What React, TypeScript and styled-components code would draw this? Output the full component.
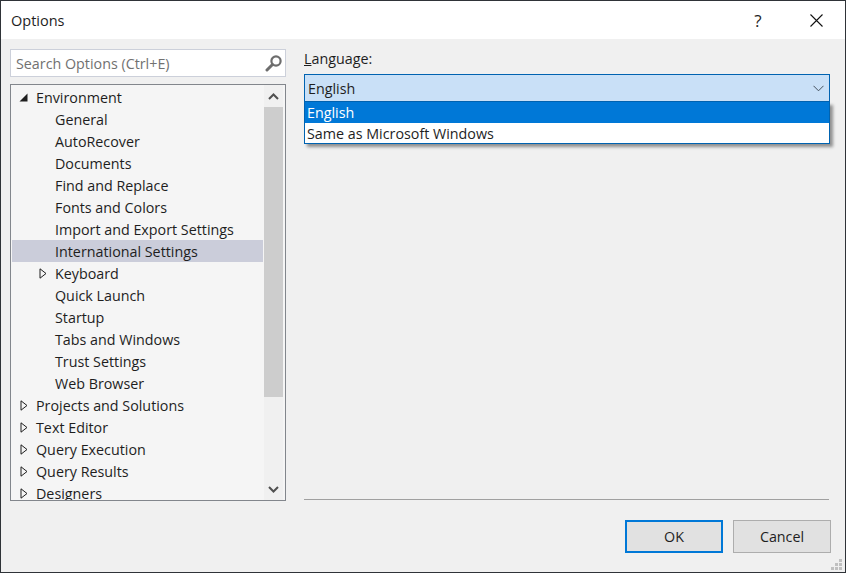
import React from 'react';
import styled, { createGlobalStyle } from 'styled-components';

const fontStack = '"Open Sans", "Noto Sans", "Liberation Sans", sans-serif';
const textColor = '#1e1e1e';
const fontSize = 14.3;

const GlobalStyle = createGlobalStyle`
  html, body {
    margin: 0;
    padding: 0;
    background: #fff;
  }
  body {
    font-family: ${fontStack};
    font-size: ${fontSize}px;
    color: ${textColor};
  }
`;

const Window = styled.div`
  position: relative;
  box-sizing: border-box;
  width: 846px;
  height: 573px;
  border: 1px solid #2f3338;
  background: #f0f0f0;
  display: flex;
  flex-direction: column;
`;

const TitleBar = styled.div`
  height: 38px;
  background: #fff;
  display: flex;
  align-items: center;
  padding-left: 10px;
`;
const Title = styled.span`
  flex: 1;
  font-size: 14.5px;
`;
const TitleButton = styled.button`
  width: 58px;
  height: 38px;
  padding: 0;
  border: 0;
  background: transparent;
  display: flex;
  align-items: center;
  justify-content: center;
  font: inherit;
  font-size: 17px;
  color: ${textColor};
`;

const Body = styled.div`
  display: flex;
  gap: 18px;
  padding: 10px 14px 0 9px;
  height: 452px;
`;

const LeftColumn = styled.div`
  width: 276px;
  display: flex;
  flex-direction: column;
  gap: 7px;
`;

const SearchBox = styled.div`
  box-sizing: border-box;
  height: 28px;
  flex: none;
  border: 1px solid #ccd0da;
  background: #fff;
  display: flex;
  align-items: center;
  padding: 0 2px 0 5px;
`;
const SearchInput = styled.span`
  flex: 1;
  color: #717171;
`;

const Tree = styled.div`
  box-sizing: border-box;
  flex: 1;
  min-height: 0;
  border: 1px solid #82868c;
  background: #f5f5f5;
  display: flex;
  overflow: hidden;
`;
const TreeList = styled.div`
  flex: 1;
  padding: 1px 1px 0 1px;
  overflow: hidden;
`;
const Row = styled.div<{ $level: number; $selected?: boolean }>`
  height: 22px;
  display: flex;
  align-items: center;
  padding-left: ${(p) => p.$level * 19 + 7}px;
  background: ${(p) => (p.$selected ? '#cbcdda' : 'transparent')};
  white-space: nowrap;
`;
const ArrowSlot = styled.span`
  width: 17px;
  flex: none;
  display: flex;
  align-items: center;
`;

const Scrollbar = styled.div`
  width: 19px;
  flex: none;
  margin-right: 2px;
  background: #f0f0f0;
  display: flex;
  flex-direction: column;
`;
const ScrollButton = styled.div`
  height: 22px;
  flex: none;
  display: flex;
  align-items: center;
  justify-content: center;
`;
const ScrollThumb = styled.div`
  height: 290px;
  flex: none;
  background: #cdcdcd;
`;
const ScrollTrack = styled.div`
  flex: 1;
`;

const RightColumn = styled.div`
  flex: 1;
  display: flex;
  flex-direction: column;
`;
const Label = styled.label`
  height: 25px;
  line-height: 20px;
`;
const ComboWrap = styled.div`
  position: relative;
  margin-right: 1px;
`;
const Combo = styled.div`
  box-sizing: border-box;
  height: 28px;
  border: 1px solid #0063b1;
  background: #c9e0f7;
  display: flex;
  align-items: center;
  justify-content: space-between;
  padding: 0 5px 0 3px;
`;
const Dropdown = styled.div`
  position: absolute;
  top: 100%;
  left: 0;
  right: 0;
  box-sizing: border-box;
  border: 1px solid #0063b1;
  border-top: 0;
  background: #fff;
  box-shadow: 3px 3px 3px rgba(0, 0, 0, 0.4);
`;
const Option = styled.div<{ $active?: boolean }>`
  height: ${(p) => (p.$active ? 21 : 20)}px;
  display: flex;
  align-items: center;
  padding-left: 2px;
  background: ${(p) => (p.$active ? '#0078d7' : '#fff')};
  color: ${(p) => (p.$active ? '#fff' : textColor)};
`;
const Separator = styled.div`
  margin-top: auto;
  margin-right: 2px;
  margin-bottom: 1px;
  height: 1px;
  background: #a0a0a0;
`;

const Footer = styled.div`
  display: flex;
  justify-content: flex-end;
  gap: 10px;
  padding: 19px 14px 0 0;
`;
const DialogButton = styled.button<{ $primary?: boolean }>`
  box-sizing: border-box;
  width: 98px;
  height: 33px;
  padding: 0;
  background: #e1e1e1;
  border: ${(p) => (p.$primary ? '2px solid #0078d7' : '1px solid #adadad')};
  font: inherit;
  color: ${textColor};
`;

const Grip = styled.svg`
  position: absolute;
  right: 2px;
  bottom: 1px;
`;

const ExpandedArrow = () => (
  <svg width="9" height="9" viewBox="0 0 9 9">
    <path d="M8.5 0.5V8.5H0.5Z" fill="#1e1e1e" />
  </svg>
);

const CollapsedArrow = () => (
  <svg width="9" height="11" viewBox="0 0 9 11">
    <path d="M2 0.8L8 5.5L2 10.2Z" fill="none" stroke="#1e1e1e" strokeWidth="1" />
  </svg>
);

const Chevron = ({ up }: { up?: boolean }) => (
  <svg width="11" height="7" viewBox="0 0 11 7">
    <path d={up ? 'M1 6L5.5 1.5L10 6' : 'M1 1L5.5 5.5L10 1'} fill="none" stroke="#505050" strokeWidth="2" />
  </svg>
);

type TreeItem = {
  label: string;
  level: number;
  arrow?: 'open' | 'closed';
  selected?: boolean;
};

const items: TreeItem[] = [
  { label: 'Environment', level: 0, arrow: 'open' },
  { label: 'General', level: 1 },
  { label: 'AutoRecover', level: 1 },
  { label: 'Documents', level: 1 },
  { label: 'Find and Replace', level: 1 },
  { label: 'Fonts and Colors', level: 1 },
  { label: 'Import and Export Settings', level: 1 },
  { label: 'International Settings', level: 1, selected: true },
  { label: 'Keyboard', level: 1, arrow: 'closed' },
  { label: 'Quick Launch', level: 1 },
  { label: 'Startup', level: 1 },
  { label: 'Tabs and Windows', level: 1 },
  { label: 'Trust Settings', level: 1 },
  { label: 'Web Browser', level: 1 },
  { label: 'Projects and Solutions', level: 0, arrow: 'closed' },
  { label: 'Text Editor', level: 0, arrow: 'closed' },
  { label: 'Query Execution', level: 0, arrow: 'closed' },
  { label: 'Query Results', level: 0, arrow: 'closed' },
  { label: 'Designers', level: 0, arrow: 'closed' },
];

const App: React.FC = () => (
  <Window>
    <GlobalStyle />
    <TitleBar>
      <Title>Options</Title>
      <TitleButton>?</TitleButton>
      <TitleButton aria-label="Close">
        <svg width="13" height="13" viewBox="0 0 13 13">
          <path d="M0.5 0.5L12.5 12.5M12.5 0.5L0.5 12.5" stroke="#111" strokeWidth="1.1" fill="none" />
        </svg>
      </TitleButton>
    </TitleBar>
    <Body>
      <LeftColumn>
        <SearchBox>
          <SearchInput>Search Options (Ctrl+E)</SearchInput>
          <svg width="18" height="18" viewBox="0 0 18 18">
            <circle cx="11" cy="7" r="4.6" fill="none" stroke="#6d6d6d" strokeWidth="2.2" />
            <path d="M7.5 10.5L2 16" stroke="#6d6d6d" strokeWidth="3" strokeLinecap="round" />
          </svg>
        </SearchBox>
        <Tree>
          <TreeList>
            {items.map((item) => (
              <Row key={item.label} $level={item.level} $selected={item.selected}>
                <ArrowSlot>
                  {item.arrow === 'open' && <ExpandedArrow />}
                  {item.arrow === 'closed' && <CollapsedArrow />}
                </ArrowSlot>
                {item.label}
              </Row>
            ))}
          </TreeList>
          <Scrollbar>
            <ScrollButton>
              <Chevron up />
            </ScrollButton>
            <ScrollThumb />
            <ScrollTrack />
            <ScrollButton>
              <Chevron />
            </ScrollButton>
          </Scrollbar>
        </Tree>
      </LeftColumn>
      <RightColumn>
        <Label>
          <u>L</u>anguage:
        </Label>
        <ComboWrap>
          <Combo>
            English
            <svg width="11" height="7" viewBox="0 0 11 7">
              <path d="M0.5 0.8L5.5 5.8L10.5 0.8" fill="none" stroke="#44505c" strokeWidth="1" />
            </svg>
          </Combo>
          <Dropdown>
            <Option $active>English</Option>
            <Option>Same as Microsoft Windows</Option>
          </Dropdown>
        </ComboWrap>
        <Separator />
      </RightColumn>
    </Body>
    <Footer>
      <DialogButton $primary>OK</DialogButton>
      <DialogButton>Cancel</DialogButton>
    </Footer>
    <Grip width="12" height="12" viewBox="0 0 12 12" fill="#c0c0c0">
      <rect x="8" y="0" width="3" height="3" />
      <rect x="4" y="4" width="3" height="3" />
      <rect x="8" y="4" width="3" height="3" />
      <rect x="0" y="8" width="3" height="3" />
      <rect x="4" y="8" width="3" height="3" />
      <rect x="8" y="8" width="3" height="3" />
    </Grip>
  </Window>
);

export default App;
